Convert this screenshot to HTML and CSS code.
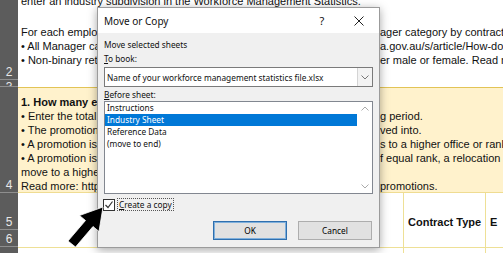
FILE: index.html
```html
<!DOCTYPE html>
<html lang="en">
<head>
    <meta charset="UTF-8">
    <title>Move or Copy</title>
    <link rel="stylesheet" href="styles.css">
</head>
<body>
<div class="sheet">
    <div class="num">2</div>
    <div class="text wide">
        <p>enter an industry subdivision in the Workforce Management Statistics.</p>
        <p class="blank"></p>
        <p class="line"><span>For each employee, select the relevant man</span><span>ager category by contract type and gender.</span></p>
        <p class="line"><span>• All Manager categories are explained at https://www.wge</span><span>a.gov.au/s/article/How-do-I-classify-managers</span></p>
        <p class="line"><span>• Non-binary returns should be counted as eith</span><span>er male or female. Read more</span></p>
    </div>

    <div class="num short">3</div>
    <div class="text wide"></div>

    <div class="num">4</div>
    <div class="text wide note">
        <p class="line"><b>1. How many employees were promoted?</b><span></span></p>
        <p class="line"><span>• Enter the total number of promotions during the reportin</span><span>g period.</span></p>
        <p class="line"><span>• The promotion is counted in the category the employee mo</span><span>ved into.</span></p>
        <p class="line"><span>• A promotion is the act of moving an employee who applie</span><span>s to a higher office or rank.</span></p>
        <p class="line"><span>• A promotion is not a transfer to another position o</span><span>f equal rank, a relocation</span></p>
        <p class="line"><span>move to a higher classification level.</span><span></span></p>
        <p class="line"><span>Read more: https://www.wgea.gov.au/s/article/</span><span>promotions.</span></p>
    </div>

    <div class="num">5</div>
    <div class="text merged"></div>
    <div class="head merged col-b">Contract Type</div>
    <div class="head merged col-c">E</div>

    <div class="num">6</div>

    <div class="num">7</div>
    <div class="text row7">Enter the number of full-time employees</div>
    <div class="col-b row7 center">Full-time</div>
    <div class="col-c row7"></div>
</div>

<div class="dialog">
    <div class="titlebar">
        <span class="title">Move or Copy</span>
        <span class="help">?</span>
        <span class="close">
            <svg width="10" height="10" viewBox="0 0 10 10"><path d="M0.5 0.5 L9.5 9.5 M9.5 0.5 L0.5 9.5" stroke="#222" stroke-width="1" fill="none"/></svg>
        </span>
    </div>
    <div class="body">
        <p class="label">Move selected sheets</p>
        <p class="label"><u>T</u>o book:</p>
        <div class="combo">
            <span class="combo-text">Name of your workforce management statistics file.xlsx</span>
            <span class="combo-btn">
                <svg width="8" height="5" viewBox="0 0 8 5"><polyline points="0.5,0.5 4,4 7.5,0.5" stroke="#777" fill="none"/></svg>
            </span>
        </div>
        <p class="label gap"><u>B</u>efore sheet:</p>
        <div class="listbox">
            <ul class="items">
                <li>Instructions</li>
                <li class="selected">Industry Sheet</li>
                <li>Reference Data</li>
                <li>(move to end)</li>
            </ul>
            <div class="scroll">
                <svg width="8" height="5" viewBox="0 0 8 5"><polyline points="0.5,4.5 4,1 7.5,4.5" stroke="#aaa" fill="none"/></svg>
                <svg width="8" height="5" viewBox="0 0 8 5"><polyline points="0.5,0.5 4,4 7.5,0.5" stroke="#aaa" fill="none"/></svg>
            </div>
        </div>
        <div class="check-row">
            <span class="checkbox">
                <svg width="10" height="10" viewBox="0 0 10 10"><polyline points="1.5,5 4,7.5 8.5,1.5" stroke="#333" stroke-width="1.2" fill="none"/></svg>
            </span>
            <span class="check-label"><u>C</u>reate a copy</span>
        </div>
        <div class="buttons">
            <button class="btn default">OK</button>
            <button class="btn">Cancel</button>
        </div>
    </div>
</div>

<svg class="pointer" width="40" height="46" viewBox="0 0 40 46">
    <polygon points="37,4 33,28.5 27,23.5 9.5,44 2,38 19.5,17.5 13.5,12.5" fill="#000" stroke="#fff" stroke-width="0.8"/>
</svg>
</body>
</html>
```

FILE: styles.css
```css
* {
    margin: 0;
    padding: 0;
    box-sizing: border-box;
}

body {
    width: 503px;
    height: 253px;
    overflow: hidden;
    position: relative;
    background: #fff;
    font-family: "Liberation Sans", Arial, sans-serif;
    font-size: 11px;
    color: #111;
}

/* spreadsheet behind the dialog */

.sheet {
    display: grid;
    grid-template-columns: 18px 385px 82px 1fr;
    grid-template-rows: 86px 7px 106px 37px 17px 20px;
    margin-top: -6px;
}

.num {
    grid-column: 1;
    background: #5c5c5c;
    color: #e8e8e8;
    border-bottom: 1px solid #8e8e8e;
    display: flex;
    align-items: flex-end;
    justify-content: center;
    font-size: 12px;
    line-height: 14px;
    padding-bottom: 0;
    overflow: hidden;
}

.num.short {
    align-items: flex-start;
}

.text {
    grid-column: 2;
    padding-left: 3px;
    line-height: 14px;
    white-space: nowrap;
    overflow: hidden;
}

.text.wide {
    grid-column: 2 / 5;
}

.blank {
    height: 17px;
}

.line {
    display: grid;
    grid-template-columns: 359px 1fr;
}

.line span,
.line b {
    overflow: hidden;
}

.note {
    background: #fff2cc;
    border-top: 1px solid #e2c456;
    border-bottom: 1px solid #efdc92;
    padding-top: 7px;
}

.merged {
    grid-row: 4 / 6;
}

.col-b {
    grid-column: 3;
    border-left: 1px solid #eee096;
}

.col-c {
    grid-column: 4;
    border-left: 1px solid #eee096;
}

.head {
    font-weight: bold;
    display: flex;
    align-items: center;
    white-space: nowrap;
    overflow: hidden;
    padding-left: 4px;
    padding-top: 3px;
}

.row7 {
    border-top: 1px solid #eee096;
    line-height: 14px;
    padding-top: 4px;
    white-space: nowrap;
    overflow: hidden;
}

.center {
    text-align: center;
}

/* Move or Copy dialog */

.dialog {
    position: absolute;
    left: 97px;
    top: 7px;
    width: 283px;
    height: 241px;
    background: #f0f0f0;
    border: 1px solid #9b9b9b;
    box-shadow: 0 2px 9px rgba(0, 0, 0, 0.35);
    font-family: "Noto Sans", sans-serif;
    font-size: 8.3px;
    color: #111;
    display: flex;
    flex-direction: column;
}

.titlebar {
    height: 25px;
    background: #fff;
    display: flex;
    align-items: center;
    padding-left: 6px;
    font-size: 10px;
}

.titlebar .title {
    flex: 1;
}

.titlebar .help {
    width: 20px;
    text-align: center;
    font-size: 11px;
    margin-right: 7px;
}

.titlebar .close {
    width: 40px;
    display: flex;
    justify-content: center;
}

.body {
    flex: 1;
    padding: 6px 6px 0 6px;
    display: flex;
    flex-direction: column;
}

.label {
    line-height: 12px;
    margin-bottom: 2px;
}

.label.gap {
    margin-top: 2px;
    margin-bottom: 0;
}

.combo {
    height: 20px;
    background: #fff;
    border: 1px solid #7a7a7a;
    display: flex;
    align-items: center;
}

.combo-text {
    flex: 1;
    padding-left: 2px;
    white-space: nowrap;
}

.combo-btn {
    width: 15px;
    height: 18px;
    display: flex;
    align-items: center;
    justify-content: center;
    background: #f3f3f3;
    border-left: 1px solid #d4d4d4;
}

.listbox {
    height: 93px;
    background: #fff;
    border: 1px solid #828790;
    display: flex;
}

.items {
    flex: 1;
    list-style: none;
}

.items li {
    height: 12px;
    line-height: 12px;
    padding-left: 2px;
}

.items li.selected {
    background: #0078d7;
    color: #fff;
}

.scroll {
    width: 15px;
    display: flex;
    flex-direction: column;
    justify-content: space-between;
    align-items: center;
    padding: 4px 0;
}

.check-row {
    display: flex;
    align-items: center;
    margin-top: 4px;
    height: 13px;
}

.checkbox {
    width: 12px;
    height: 12px;
    border: 1px solid #333;
    background: #fff;
    display: flex;
    align-items: center;
    justify-content: center;
    margin-left: -1px;
}

.check-label {
    margin-left: 2px;
    padding: 0 1px;
    line-height: 11px;
    border: 1px dotted #555;
}

.buttons {
    display: flex;
    justify-content: flex-end;
    gap: 11px;
    margin-top: 10px;
    padding-right: 1px;
}

.btn {
    width: 74px;
    height: 19px;
    font-family: "Noto Sans", sans-serif;
    font-size: 8.3px;
    background: #e1e1e1;
    border: 1px solid #adadad;
    color: #000;
}

.btn.default {
    border: 1px solid #2f6fae;
    box-shadow: inset 0 0 0 1px #7fb0dc;
}

.pointer {
    position: absolute;
    left: 66px;
    top: 203px;
}
```
